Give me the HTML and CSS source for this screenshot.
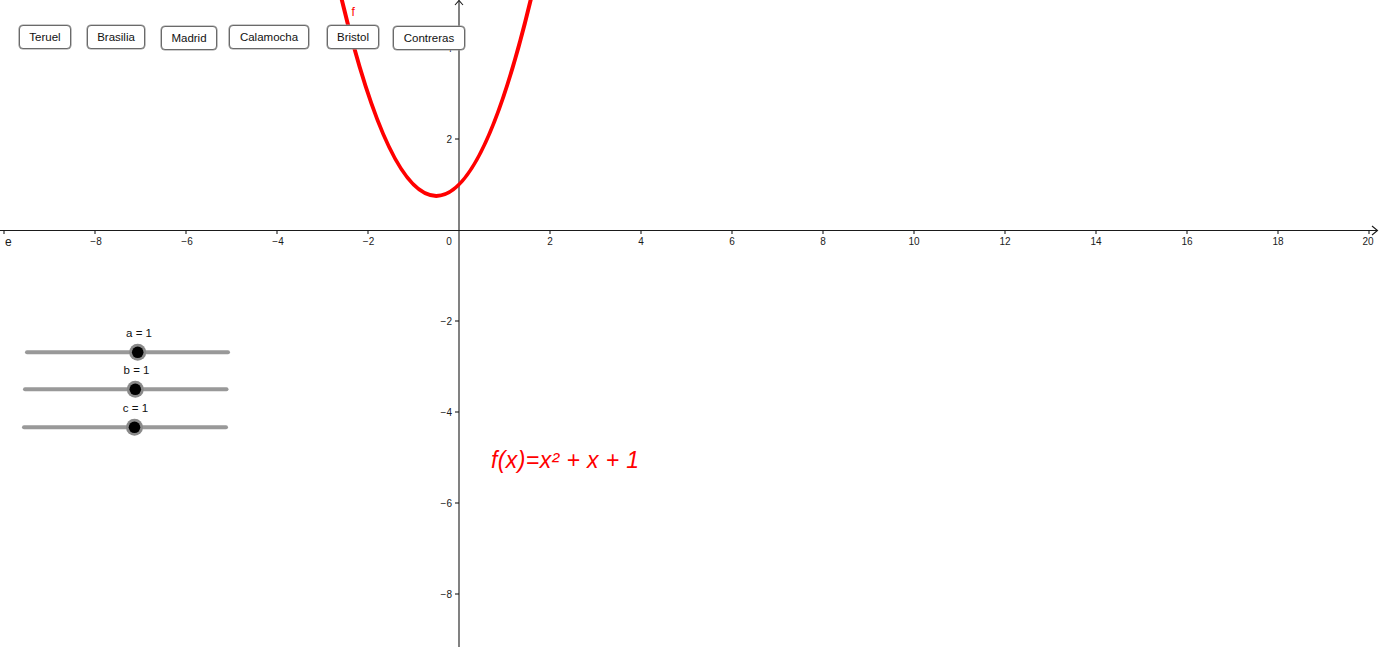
FILE: index.html
```html
<!DOCTYPE html>
<html lang="es">
<head>
<meta charset="utf-8">
<title>GeoGebra</title>
<link rel="stylesheet" href="styles.css">
</head>
<body>
<div class="canvas">
  <svg class="graph" width="1382" height="647" viewBox="0 0 1382 647" xmlns="http://www.w3.org/2000/svg">
    <g class="axes">
      <line x1="0" y1="230.5" x2="1377" y2="230.5"/>
      <polyline points="1372,226 1377.5,230.5 1372,235" fill="none"/>
      <line x1="459" y1="0.5" x2="459" y2="647"/>
      <polyline points="455,5 459,0.5 463,5" fill="none"/>
      <!-- x ticks -->
      <line x1="4" y1="230" x2="4" y2="234"/>
      <line x1="95" y1="230" x2="95" y2="234"/>
      <line x1="186" y1="230" x2="186" y2="234"/>
      <line x1="277" y1="230" x2="277" y2="234"/>
      <line x1="368" y1="230" x2="368" y2="234"/>
      <line x1="550" y1="230" x2="550" y2="234"/>
      <line x1="641" y1="230" x2="641" y2="234"/>
      <line x1="732" y1="230" x2="732" y2="234"/>
      <line x1="823" y1="230" x2="823" y2="234"/>
      <line x1="914" y1="230" x2="914" y2="234"/>
      <line x1="1005" y1="230" x2="1005" y2="234"/>
      <line x1="1096" y1="230" x2="1096" y2="234"/>
      <line x1="1187" y1="230" x2="1187" y2="234"/>
      <line x1="1278" y1="230" x2="1278" y2="234"/>
      <line x1="1369" y1="230" x2="1369" y2="234"/>
      <!-- y ticks -->
      <line x1="455" y1="48" x2="459" y2="48"/>
      <line x1="455" y1="139" x2="459" y2="139"/>
      <line x1="455" y1="321" x2="459" y2="321"/>
      <line x1="455" y1="412" x2="459" y2="412"/>
      <line x1="455" y1="503" x2="459" y2="503"/>
      <line x1="455" y1="594" x2="459" y2="594"/>
    </g>
    <g class="ticklabels xl">
      <text x="96" y="244.5">−8</text>
      <text x="187" y="244.5">−6</text>
      <text x="278" y="244.5">−4</text>
      <text x="368.5" y="244.5">−2</text>
      <text x="449" y="244.5">0</text>
      <text x="550" y="244.5">2</text>
      <text x="641" y="244.5">4</text>
      <text x="732" y="244.5">6</text>
      <text x="823" y="244.5">8</text>
      <text x="914" y="244.5">10</text>
      <text x="1005" y="244.5">12</text>
      <text x="1096" y="244.5">14</text>
      <text x="1187" y="244.5">16</text>
      <text x="1278" y="244.5">18</text>
      <text x="1368" y="244.5">20</text>
    </g>
    <g class="ticklabels yl">
      <text x="452" y="51.5">4</text>
      <text x="452" y="142.5">2</text>
      <text x="452" y="324.5">−2</text>
      <text x="452" y="415.5">−4</text>
      <text x="452" y="506.5">−6</text>
      <text x="452" y="597.5">−8</text>
    </g>
    <text class="label-e" x="5" y="245.5">e</text>
    <path class="curve" d="M336.15,-24.35 Q436.25,416.1 536.35,-24.35"/>
    <text class="label-f" x="351.5" y="15.5">f</text>

    <g class="slider">
      <text class="slabel" x="139" y="337">a = 1</text>
      <line class="track" x1="27" y1="352.3" x2="228" y2="352.3"/>
      <circle class="halo" cx="137.7" cy="352.3" r="8.5"/>
      <circle class="knob" cx="137.7" cy="352.3" r="5.8"/>
    </g>
    <g class="slider">
      <text class="slabel" x="136.5" y="374">b = 1</text>
      <line class="track" x1="25" y1="389.3" x2="226.5" y2="389.3"/>
      <circle class="halo" cx="135.3" cy="389.3" r="8.5"/>
      <circle class="knob" cx="135.3" cy="389.3" r="5.8"/>
    </g>
    <g class="slider">
      <text class="slabel" x="135.5" y="412">c = 1</text>
      <line class="track" x1="24" y1="427.3" x2="226" y2="427.3"/>
      <circle class="halo" cx="134.5" cy="427.3" r="8.5"/>
      <circle class="knob" cx="134.5" cy="427.3" r="5.8"/>
    </g>

    <text class="formula" x="491" y="467.5">f(x)=x² + x + 1</text>
  </svg>

  <button class="btn b-teruel">Teruel</button>
  <button class="btn b-brasilia">Brasilia</button>
  <button class="btn b-madrid">Madrid</button>
  <button class="btn b-calamocha">Calamocha</button>
  <button class="btn b-bristol">Bristol</button>
  <button class="btn b-contreras">Contreras</button>
</div>
</body>
</html>
```

FILE: styles.css
```css
html, body {
  margin: 0;
  padding: 0;
  background: #ffffff;
  overflow: hidden;
}

.canvas {
  position: relative;
  width: 1382px;
  height: 647px;
  background: #ffffff;
  font-family: "Liberation Sans", Arial, sans-serif;
}

.graph {
  display: block;
}

.axes line,
.axes polyline {
  stroke: #1a1a1a;
  stroke-width: 1.1;
}

.ticklabels text {
  font-family: "Liberation Sans", Arial, sans-serif;
  font-size: 10px;
  fill: #1a1a1a;
}

.xl text {
  text-anchor: middle;
}

.yl text {
  text-anchor: end;
}

.label-e {
  font-family: "Liberation Sans", Arial, sans-serif;
  font-size: 12px;
  fill: #1a1a1a;
}

.curve {
  fill: none;
  stroke: #ff0000;
  stroke-width: 4;
}

.label-f {
  font-family: "Liberation Sans", Arial, sans-serif;
  font-size: 12px;
  fill: #ff0000;
}

.slabel {
  font-family: "Liberation Sans", Arial, sans-serif;
  font-size: 11.5px;
  fill: #111111;
  text-anchor: middle;
}

.track {
  stroke: #999999;
  stroke-width: 4;
  stroke-linecap: round;
}

.halo {
  fill: #8a8a8a;
}

.knob {
  fill: #000000;
}

.formula {
  font-family: "Liberation Sans", Arial, sans-serif;
  font-style: italic;
  font-size: 23px;
  letter-spacing: 0.4px;
  fill: #ff0000;
}

.btn {
  position: absolute;
  box-sizing: border-box;
  height: 24px;
  margin: 0;
  padding: 0;
  display: flex;
  align-items: center;
  justify-content: center;
  background: #ffffff;
  border: 1px solid #6a6a6a;
  border-radius: 4px;
  box-shadow: 0 0 0 0.6px #9a9a9a;
  font-family: "Liberation Sans", Arial, sans-serif;
  font-size: 11.5px;
  color: #111111;
}

.b-teruel { left: 19px; top: 25px; width: 52px; }
.b-brasilia { left: 87px; top: 25px; width: 58px; }
.b-madrid { left: 161px; top: 26px; width: 56px; }
.b-calamocha { left: 229px; top: 25px; width: 80px; }
.b-bristol { left: 327px; top: 25px; width: 52px; }
.b-contreras { left: 393px; top: 26px; width: 72px; }
```
